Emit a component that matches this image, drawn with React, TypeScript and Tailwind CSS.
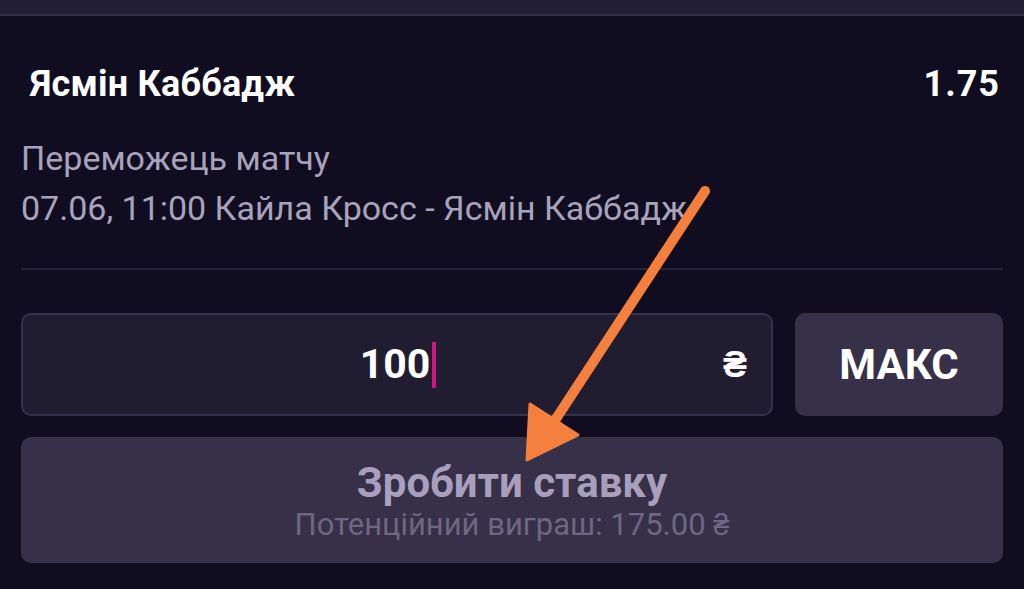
import React from 'react';

const Arrow: React.FC = () => (
  <svg className="pointer-events-none absolute left-0 top-0" width="1024" height="589" viewBox="0 0 1024 589">
    <line x1="705" y1="191" x2="550" y2="428" stroke="#f5803e" strokeWidth="10" strokeLinecap="round" />
    <polygon points="527,460 578,435 530,404" fill="#f5803e" stroke="#f5803e" strokeWidth="3" strokeLinejoin="round" />
  </svg>
);

const Hryvnia: React.FC<{ className?: string }> = ({ className }) => (
  <span className={`font-['Liberation_Sans','Roboto',sans-serif] ${className ?? ''}`}>₴</span>
);

export default function App() {
  return (
    <div className="relative h-[589px] w-[1024px] overflow-hidden bg-[#110d20] font-['Roboto','Liberation_Sans',sans-serif]">
      <div className="h-[16px] border-b-2 border-[#35314a] bg-[#221e33]" />

      <div className="px-[21px]">
        <div className="mt-[48px] flex items-center justify-between pl-[9px] pr-[3px]">
          <span className="text-[36px] font-bold leading-[40px] tracking-[0.2px] text-white">Ясмін Каббадж</span>
          <span className="text-[36px] font-bold leading-[40px] tracking-[1px] text-white">1.75</span>
        </div>

        <div className="mt-[29px] text-[34px] leading-[50px] text-[#a8a3ba]">
          <div>Переможець матчу</div>
          <div>07.06, 11:00 Кайла Кросс - Ясмін Каббадж</div>
        </div>

        <div className="mt-[35px] h-[2px] bg-[#27233a]" />

        <div className="mt-[43px] flex gap-[22px]">
          <div className="flex h-[103px] flex-1 items-center rounded-[10px] border-2 border-[#36314a] bg-[#211d31] pr-[26px]">
            <div className="flex flex-1 items-center justify-center pl-[50px]">
              <span className="text-[41px] font-bold text-white">100</span>
              <span className="ml-[2px] h-[46px] w-[4px] bg-[#d0177f]" />
            </div>
            <Hryvnia className="w-[22px] text-center text-[36px] font-bold leading-none text-white" />
          </div>
          <button className="flex h-[103px] w-[208px] items-center justify-center rounded-[10px] bg-[#363048] text-[42px] font-bold text-white">
            МАКС
          </button>
        </div>

        <button className="mt-[21px] flex h-[126px] w-full flex-col items-center justify-center rounded-[10px] bg-[#363048] pt-[4px]">
          <span className="text-[42px] font-bold leading-[46px] text-[#a79fbb]">Зробити ставку</span>
          <span className="text-[31px] leading-[38px] text-[#6e6783]">
            Потенційний виграш: 175.00 <Hryvnia className="text-[29px]" />
          </span>
        </button>
      </div>

      <Arrow />
    </div>
  );
}
